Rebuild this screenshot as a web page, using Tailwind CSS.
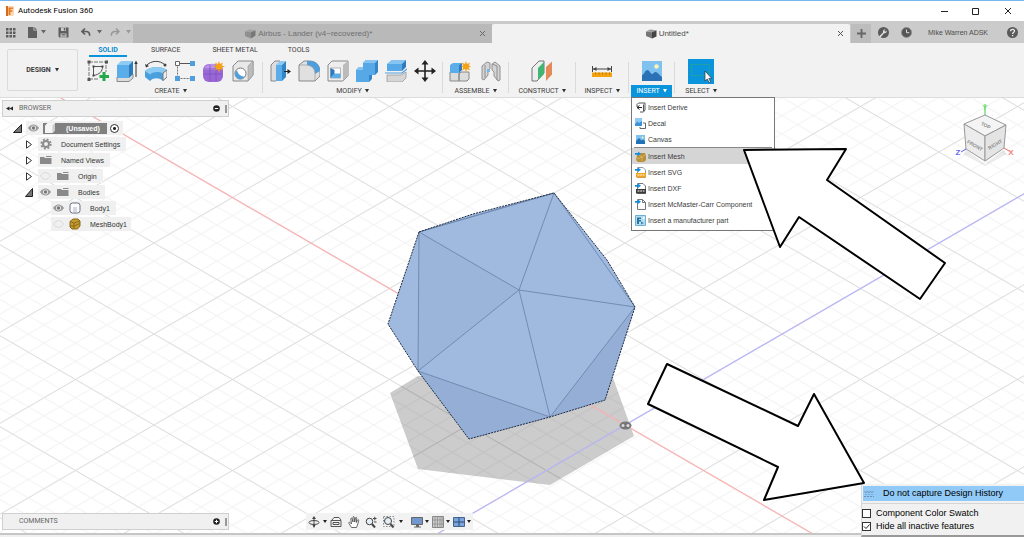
<!DOCTYPE html>
<html lang="en">
<head>
  <meta charset="UTF-8" />
  <title>Autodesk Fusion 360</title>
  <meta name="viewport" content="width=device-width, initial-scale=1.0" />
  <script src="https://cdn.jsdelivr.net/npm/@tailwindcss/browser@4"></script>
</head>
<body class="relative h-screen flex flex-col overflow-hidden bg-white text-[#3c3c3c] text-[7px] leading-none font-['Liberation_Sans',sans-serif]">

  <!-- Title bar -->
  <header class="h-[21px] shrink-0 flex items-center border-t border-[#78b7ee] bg-white pl-[5px] text-black">
    <svg class="w-[10px] h-[10px]" viewBox="0 0 10 10">
      <path d="M1 0h8v9l-1 1H1z" fill="#fbd9bb"/><path d="M1 0h2v10H1z" fill="#d9671c"/>
      <path d="M3.500 1.500H8V3H5.500v1.300h2v1.500h-2V9h-2z" fill="#ee7a1f"/>
    </svg>
    <h1 class="ml-[3px] text-[8px] font-[Roboto,sans-serif]">Autodesk Fusion 360</h1>
    <div class="ml-auto mr-3 flex gap-6">
      <button aria-label="Minimize"><svg class="w-2 h-2" viewBox="0 0 8 8" stroke="#222" fill="none"><path d="M1 4.500h7"/></svg></button>
      <button aria-label="Maximize"><svg class="w-2 h-2" viewBox="0 0 8 8" stroke="#222" fill="none"><path d="M.5 1.500h6v6h-6z"/></svg></button>
      <button aria-label="Close"><svg class="w-2 h-2" viewBox="0 0 8 8" stroke="#222" fill="none"><path d="M1 1l6 6M7 1L1 7"/></svg></button>
    </div>
  </header>

  <!-- Document tabs -->
  <div class="h-[22px] shrink-0 flex items-stretch bg-[#cbcbcb] text-[#4c4c4c]">
    <div class="w-[133px] shrink-0 flex items-center pl-[5px]">
      <button aria-label="Data panel"><svg class="w-[11px] h-[11px]" viewBox="0 0 11 11" fill="#5c5c5c"><path d="M1 1h2.500v2.500H1zM4.500 1H7v2.500H4.500zM8 1h2.500v2.500H8zM1 4.500h2.500V7H1zM4.500 4.500H7V7H4.500zM8 4.500h2.500V7H8zM1 8h2.500v2.500H1zM4.500 8H7v2.500H4.500zM8 8h2.500v2.500H8z"/></svg></button>
      <button aria-label="File" class="ml-3 flex items-center gap-1">
        <svg class="w-[9px] h-[11px]" viewBox="0 0 9 11"><path d="M0 0h5.500v3.500H9V11H0zM6.300 0L9 2.700H6.300z" fill="#606060"/></svg>
        <svg class="w-[5px] h-1" viewBox="0 0 5 4" fill="#666"><path d="M0 0h5L2.500 3.500z"/></svg>
      </button>
      <button aria-label="Save" class="ml-3"><svg class="w-[11px] h-[11px]" viewBox="0 0 11 11"><path d="M.5.500h10v10H1.500l-1-1z" fill="#5e5e5e"/><path d="M3 .5h5v3.500H3z" fill="#cbcbcb"/><path d="M5.800 1h1.500v2.500H5.800z" fill="#5e5e5e"/><path d="M2.500 6.500h6v4h-6z" fill="#cbcbcb"/><path d="M3.500 7.500h4M3.500 9h4" stroke="#5e5e5e" stroke-width=".8"/></svg></button>
      <button aria-label="Undo" class="ml-3 flex items-center gap-[6px]">
        <svg class="w-[10px] h-[10px]" viewBox="0 0 10 10"><path d="M4 1.500L1 4.500l3 3M1.500 4.500H5c2.500 0 3.700 1.500 3.700 4.300" fill="none" stroke="#5c5c5c" stroke-width="1.700"/></svg>
        <svg class="w-[5px] h-1" viewBox="0 0 5 4" fill="#666"><path d="M0 0h5L2.500 3.500z"/></svg>
      </button>
      <button aria-label="Redo" class="ml-2 flex items-center gap-[6px]">
        <svg class="w-[10px] h-[10px]" viewBox="0 0 10 10"><path d="M6 1.500l3 3-3 3M8.500 4.500H5C2.500 4.500 1.300 6 1.300 8.800" fill="none" stroke="#999" stroke-width="1.500"/></svg>
        <svg class="w-[5px] h-1" viewBox="0 0 5 4" fill="#999"><path d="M0 0h5L2.500 3.500z"/></svg>
      </button>
    </div>
    <div class="flex-1 mt-[3px] flex items-center bg-[#b9b9b9] px-[6px] text-[8px] text-[#6e6e6e]">
      <div class="flex-1 flex items-center justify-center gap-[2px]">
        <svg class="w-[11px] h-[10px]" viewBox="0 0 11 10"><path d="M0 2.500L4 .5l6 .8L6.500 3z" fill="#a2a2a2"/><path d="M0 2.500L6 3.200V9.500L0 7z" fill="#8f8f8f"/><path d="M6 3.200l4.500-1.900V6.500L6 9.500z" fill="#777"/></svg>
        <span>Airbus - Lander (v4~recovered)*</span>
      </div>
      <button aria-label="Close Airbus - Lander"><svg class="w-[7px] h-[7px]" viewBox="0 0 7 7" stroke="#666"><path d="M1 1l5 5M6 1L1 6"/></svg></button>
    </div>
    <div class="flex-1 mt-[3px] flex items-center rounded-t-xs bg-[#f2f2f2] px-[6px] text-[8px]">
      <div class="flex-1 flex items-center justify-center gap-[2px]">
        <svg class="w-[11px] h-[10px]" viewBox="0 0 11 10"><path d="M0 2.500L4 .5l6 .8L6.500 3z" fill="#999"/><path d="M0 2.500L6 3.200V9.500L0 7z" fill="#777"/><path d="M6 3.200l4.500-1.900V7.500L6 9.500z" fill="#444"/></svg>
        <span>Untitled*</span>
      </div>
      <button aria-label="Close Untitled"><svg class="w-[7px] h-[7px]" viewBox="0 0 7 7" stroke="#555"><path d="M1 1l5 5M6 1L1 6"/></svg></button>
    </div>
    <div class="w-[174px] shrink-0 flex items-center pl-px pr-[6px]">
      <button aria-label="New design" class="w-5 h-[19px] mt-[3px] flex items-center justify-center bg-[#bdbdbd]"><svg class="w-[9px] h-[9px]" viewBox="0 0 9 9" stroke="#666" stroke-width="1.800"><path d="M0 4.500h9M4.500 0v9"/></svg></button>
      <button aria-label="Extensions" class="ml-[7px]"><svg class="w-[11px] h-[11px]" viewBox="0 0 11 11"><circle cx="5.500" cy="5.500" r="5.500" fill="#5a5a5a"/><path d="M1 9.500l4-4c-.4-2 .8-3.300 2.500-3.200L6.300 3.700l.9 1 1.500-1.200c.3 1.800-1 3.100-2.700 2.700L2.500 10.500z" fill="#e2e2e2"/></svg></button>
      <button aria-label="Job status" class="ml-3"><svg class="w-[11px] h-[11px]" viewBox="0 0 11 11"><circle cx="5.500" cy="5.500" r="5" fill="#555" stroke="#8e8e8e"/><path d="M5.500 2.500v3.200h2.800" stroke="#ddd" fill="none"/></svg></button>
      <span class="ml-4">Mike Warren ADSK</span>
      <button aria-label="Help" class="ml-auto"><svg class="w-[11px] h-[11px]" viewBox="0 0 11 11"><circle cx="5.500" cy="5.500" r="5.500" fill="#5a5a5a"/><path d="M3.600 4.200c0-2.600 3.900-2.400 3.900-.1 0 1.500-1.900 1.500-1.900 3M5.600 8v1.300" stroke="#eee" stroke-width="1.300" fill="none"/></svg></button>
    </div>
  </div>

  <!-- Ribbon -->
  <div class="relative z-20 h-[54px] shrink-0 flex bg-[#f2f2f2] font-[Roboto,sans-serif]">
    <button class="ml-[7px] mr-[2px] my-[6px] w-[71px] shrink-0 flex items-center justify-center gap-1 rounded-xs border border-[#dadada] font-bold">
      DESIGN <svg class="w-1 h-1" viewBox="0 0 4 4" fill="#333"><path d="M0 0h4L2 3.500z"/></svg>
    </button>
    <div class="flex-1">
      <nav class="h-[15px] flex items-stretch gap-6 pl-[9px]">
        <button class="h-[14px] w-[38px] pt-[2px] border-b-2 border-[#0a94dc] font-bold text-[#0a8ad0]">SOLID</button>
        <button class="h-[14px]">SURFACE</button>
        <button class="h-[14px] ml-2">SHEET METAL</button>
        <button class="h-[14px] ml-[6px]">TOOLS</button>
      </nav>
      <div class="h-[39px] flex">
        <!-- Create -->
        <section class="px-[7px] pt-[2px]">
          <div class="flex gap-[7px]">
            <button aria-label="Create sketch"><svg class="w-[22px] h-[22px]" viewBox="0 0 22 22" fill="none"><path d="M2 2v17M2 2h17v10M2 19h10" stroke="#777" stroke-dasharray="4 1"/><path d="M.5.500h3v3h-3zM18 .5h3v3h-3zM.5 18h3v3h-3z" fill="#555"/><path d="M6.500 6.500h9c0 5-3 8-9 9z" stroke="#555"/><path d="M5.500 5.500h2v2h-2zM14.500 5.500h2v2h-2zM5.500 14.500h2v2h-2z" fill="#444"/><path d="M17 12v9M12.500 16.500h9.500" stroke="#24a84c" stroke-width="3"/></svg></button>
            <button aria-label="Extrude"><svg class="w-[22px] h-[22px]" viewBox="0 0 22 22"><path d="M1 17l4-3h12v4l-4 3.500H1z" fill="#ddd" stroke="#888"/><path d="M1 5l4-4h12l-4 4z" fill="#8ecbf2"/><path d="M1 5h12v13H1z" fill="#5badea"/><path d="M13 5l4-4v13l-4 4z" fill="#2b7cbd"/><path d="M20 17V3" stroke="#333"/><path d="M18.300 4L20 .5 21.700 4z" fill="#333"/></svg></button>
            <button aria-label="Revolve"><svg class="w-[22px] h-[22px]" viewBox="0 0 22 22"><path d="M1 6C6 0 15 0 20 5" fill="none" stroke="#444"/><path d="M0 4l1 3.500L4 6z" fill="#333"/><circle cx="20" cy="5" r="1.500" fill="#444"/><path d="M0 11c6-5 16-5 22-1v7l-4 4c-3-3-9-4-13 0l-5-4z" fill="#4a9fdd"/><path d="M0 11c6-5 16-5 22-1l-4 3.500c-4-2-9-2-13 1z" fill="#8ecbf2"/><path d="M18 13l4-3v7l-4 3.500z" fill="#eee" stroke="#777"/></svg></button>
            <button aria-label="Pattern"><svg class="w-[22px] h-[22px]" viewBox="0 0 22 22"><path d="M3.500 3.500v15h15" fill="none" stroke="#777" stroke-dasharray="2 1"/><path d="M4 3.500h14" stroke="#555"/><path d="M1.500 1.500h4v4h-4z" fill="#fff" stroke="#666"/><path d="M16 1h5v5h-5zM1 16h5v5H1zM16 16h5v5h-5z" fill="#4e9fdc"/></svg></button>
            <button aria-label="Create form"><svg class="w-[22px] h-[22px]" viewBox="0 0 22 22"><rect x="0" y="4" width="20" height="18" rx="6" fill="#9a68d4"/><path d="M1 8c4-5 10-5 13-3l-1 5H1z" fill="#bb93ea"/><path d="M1 14h18M7 5v16M13 5v16M1 9h18" stroke="#7d4fc0" stroke-width=".8" fill="none"/><path d="M16 1l1 3 3-1.500L18.800 5.500 22 6.500l-3.200 1L20 10.500 17 9l-1 3.500L15 9l-3 1.500 1.200-3L10 6.500l3.200-1L12 2.500 15 4z" fill="#f5a219"/></svg></button>
            <button aria-label="Hole"><svg class="w-[22px] h-[22px]" viewBox="0 0 22 22"><path d="M1 6l5-5h15v14l-5 6H1z" fill="#e8e8e8" stroke="#888"/><path d="M16 6l5-5v14l-5 6z" fill="#bcbcbc" stroke="#999" stroke-width=".6"/><circle cx="8.500" cy="13.500" r="5.500" fill="#fff" stroke="#777"/><path d="M5 10.200a5 5 0 107.500 6.300C8.500 16.500 6 14 5 10.200z" fill="#4e9fdc"/></svg></button>
          </div>
          <button class="mt-[3px] h-3 w-full flex items-center justify-center gap-[3px]">CREATE <svg class="w-1 h-1" viewBox="0 0 4 4" fill="#333"><path d="M0 0h4L2 3.500z"/></svg></button>
        </section>
        <div class="ml-px w-px my-1 bg-[#dadada]"></div>
        <!-- Modify -->
        <section class="px-[6px] pt-[2px]">
          <div class="flex gap-[7px]">
            <button aria-label="Press pull"><svg class="w-[22px] h-[22px]" viewBox="0 0 22 22"><path d="M2 5l4-4h5v16l-4 4H2z" fill="#ddd" stroke="#888"/><path d="M7 5h6v16H7z" fill="#5badea"/><path d="M7 5l4-4h6l-4 4z" fill="#8ecbf2"/><path d="M13 5l4-4v16l-4 4z" fill="#2f86c9"/><path d="M15 11.500h5" stroke="#222"/><path d="M18.500 9l3.500 2.500-3.500 2.500z" fill="#222"/></svg></button>
            <button aria-label="Fillet"><svg class="w-[22px] h-[22px]" viewBox="0 0 22 22"><path d="M1 5l5-4h5c7 0 11 4 11 11v4l-5 5H1z" fill="#e0e0e0" stroke="#888"/><path d="M9 1h3c6 0 10 4 10 10l-5 3c0-5-2-8-8-9z" fill="#4e9fdc"/><path d="M1 5h6c6 0 10 3 10 9v7" fill="none" stroke="#999" stroke-width=".7"/></svg></button>
            <button aria-label="Shell"><svg class="w-[22px] h-[22px]" viewBox="0 0 22 22"><path d="M1 5l4-4h16v15l-5 5H1z" fill="#eee" stroke="#888"/><path d="M16 5l5-4v15l-5 5z" fill="#bbb"/><path d="M3.500 8h10v10h-10z" fill="#fff" stroke="#888" stroke-width=".6"/><path d="M3.500 8l4 2v4l-4 4z" fill="#2f79bd"/><path d="M3.500 18l4-4.500h6V18z" fill="#5badea"/></svg></button>
            <button aria-label="Combine"><svg class="w-[22px] h-[22px]" viewBox="0 0 22 22"><path d="M7 3l3-3h12v12l-3 3h-3v4l-3 3H0V10l3-3h4z" fill="#3485ca"/><path d="M7 3h12v12h-6v7H0V10h7z" fill="#57a8e6"/><path d="M7 3l3-3h12l-3 3zM0 10l3-3h4v3z" fill="#86c5f1"/></svg></button>
            <button aria-label="Split body"><svg class="w-[22px] h-[22px]" viewBox="0 0 22 22"><path d="M2 15h14l5-3v6l-4 4H2z" fill="#d6d6d6" stroke="#999" stroke-width=".8"/><path d="M2 4l5-4h14l-4 4v7H2z" fill="#57a8e6"/><path d="M2 4l5-4h14l-4 4z" fill="#86c5f1"/><path d="M17 4l4-4v7l-4 4z" fill="#2f79bd"/><path d="M0 13h17l5-4" fill="none" stroke="#4e9fdc" stroke-width="1.200"/></svg></button>
            <button aria-label="Move"><svg class="w-[22px] h-[22px]" viewBox="0 0 22 22"><path d="M11 3v16M3 11h16" stroke="#222" stroke-width="1.600"/><path d="M11 0l3.500 4.500h-7zM11 22l3.500-4.500h-7zM0 11l4.500-3.500v7zM22 11l-4.500-3.500v7z" fill="#222"/></svg></button>
          </div>
          <button class="mt-[3px] h-3 w-full flex items-center justify-center gap-[3px]">MODIFY <svg class="w-1 h-1" viewBox="0 0 4 4" fill="#333"><path d="M0 0h4L2 3.500z"/></svg></button>
        </section>
        <div class="w-px my-1 bg-[#dadada]"></div>
        <!-- Assemble -->
        <section class="px-[6px] pt-[2px]">
          <div class="flex gap-[9px]">
            <button aria-label="New component"><svg class="w-[22px] h-[22px]" viewBox="0 0 22 22"><path d="M1 12h9v9H1zM10 14l2-2h8v7l-2 2h-8z" fill="#ddd" stroke="#888"/><path d="M1 5l3-2h9l-3 2v8H1z" fill="#5badea"/><path d="M10 5l3-2v7l-3 3z" fill="#2f79bd"/><path d="M17 1l1 3 3-1.500L19.800 5.500 22 6.500l-2.200 1L21 10.500 18 9l-1 3.500L16 9l-3 1.500 1.200-3L12 6.500l2.200-1L13 2.500 16 4z" fill="#f5a219"/></svg></button>
            <button aria-label="Joint"><svg class="w-[22px] h-[22px]" viewBox="0 0 22 22" stroke="#888" stroke-width=".9"><path d="M2 6l5-4 3 1v6l-2 2v4l-4 5-2-1z" fill="#d4d4d4"/><path d="M5 5v13" fill="none"/><path d="M12 4l3-2 5 4v14l-2 1-4-5v-4l-2-2z" fill="#d4d4d4"/><path d="M17 6v14M12 4l5 2" fill="none"/><path d="M7 9h3v3H7z" fill="#79b6e4" stroke="none"/></svg></button>
          </div>
          <button class="mt-[3px] h-3 w-full flex items-center justify-center gap-[3px]">ASSEMBLE <svg class="w-1 h-1" viewBox="0 0 4 4" fill="#333"><path d="M0 0h4L2 3.500z"/></svg></button>
        </section>
        <div class="w-px my-1 bg-[#dadada]"></div>
        <!-- Construct -->
        <section class="w-[66px] pt-[2px]">
          <button aria-label="Offset plane" class="block mx-auto"><svg class="w-[22px] h-[22px]" viewBox="0 0 22 22"><path d="M1 8l7-7h5v12l-7 8H1z" fill="#eee" stroke="#777"/><path d="M7 8l6-6v12l-6 6z" fill="#42b573"/><path d="M15 7l6-5.500v13L15 21z" fill="#e48a56"/></svg></button>
          <button class="mt-[3px] h-3 w-full flex items-center justify-center gap-[3px]">CONSTRUCT <svg class="w-1 h-1" viewBox="0 0 4 4" fill="#333"><path d="M0 0h4L2 3.500z"/></svg></button>
        </section>
        <div class="w-px my-1 bg-[#dadada]"></div>
        <!-- Inspect -->
        <section class="w-[52px] pt-[2px]">
          <button aria-label="Measure" class="block mx-auto"><svg class="w-[22px] h-[22px]" viewBox="0 0 22 22"><path d="M1.500 6v6M20.500 6v6M2 9h18" stroke="#444"/><path d="M2 9l3.500-2v4zM20 9l-3.500-2v4z" fill="#444"/><path d="M1 12.500h20V17H1z" fill="#f2a30d"/><path d="M4.500 12.500v2M8 12.500v2M11.500 12.500v2M15 12.500v2M18.500 12.500v2" stroke="#a56b00" stroke-width=".8"/></svg></button>
          <button class="mt-[3px] h-3 w-full flex items-center justify-center gap-[3px]">INSPECT <svg class="w-1 h-1" viewBox="0 0 4 4" fill="#333"><path d="M0 0h4L2 3.500z"/></svg></button>
        </section>
        <div class="w-px my-1 bg-[#dadada]"></div>
        <!-- Insert -->
        <section class="relative w-[45px] pt-[2px]">
          <button aria-label="Insert image" class="block mx-auto"><svg class="w-[22px] h-[22px]" viewBox="0 0 22 22"><path d="M1 1h20v20H1z" fill="#7fc2f0"/><circle cx="15.500" cy="6.500" r="2.200" fill="#fdf4b8"/><path d="M1 15c2 0 3-5 5.500-5 2 0 3 4 4.500 4s2-2 3.500-2c2 0 4 3 6.500 5v4H1z" fill="#2a72b5"/></svg></button>
          <button class="mt-[3px] mx-auto h-3 w-[41px] flex items-center justify-center gap-[3px] bg-[#0a94dc] text-white" aria-expanded="true">INSERT <svg class="w-1 h-1" viewBox="0 0 4 4" fill="#fff"><path d="M0 0h4L2 3.500z"/></svg></button>

          <ul class="absolute top-full left-[2px] w-36 border border-[#777] bg-white pt-px pb-[2px] font-['Liberation_Sans',sans-serif] whitespace-nowrap">
            <li><button class="h-4 w-full flex items-center gap-[2px] pl-[3px]"><svg class="w-[11px] h-[11px]" viewBox="0 0 11 11" fill="none" stroke="#555"><path d="M2 5V2.500L3.500 1H10v7l-1.500 2H5M8.500 2.500V9"/><path d="M7 5.500H2.500M4.500 3.500l-2.500 2 2.500 2" stroke="#222"/></svg>Insert Derive</button></li>
            <li><button class="h-4 w-full flex items-center gap-[2px] pl-[3px]"><svg class="w-[11px] h-[11px]" viewBox="0 0 11 11"><path d="M0 0h7v8H0z" fill="#3c92d6"/><path d="M0 0h7v3L4 5 2.500 3.500 0 6z" fill="#8fcaf2"/><path d="M8 5h2.500v5.500H5V9" fill="none" stroke="#666"/></svg>Decal</button></li>
            <li><button class="h-4 w-full flex items-center gap-[2px] pl-[3px]"><svg class="w-[11px] h-[11px]" viewBox="0 0 11 11"><path d="M1 1h9v9H1z" fill="#7fc2f0"/><circle cx="7.500" cy="3.500" r="1" fill="#fff3a8"/><path d="M1 7l3-3 2.500 2.500L8 5.500l2 1.500v3H1z" fill="#2073b8"/></svg>Canvas</button></li>
            <li class="mx-[2px] h-px bg-[#888]"></li>
            <li><button class="h-4 w-full flex items-center gap-[2px] bg-[#d5d5d5] pl-[3px]"><svg class="w-[11px] h-[11px]" viewBox="0 0 11 11"><path d="M2 4l2-2h6l1 3v4l-2 2H3L1 9z" fill="#b98f3a"/><path d="M4 4l3 2 3-2M7 6v4M2 8l5-2" stroke="#e2c272" stroke-width=".7" fill="none"/><path d="M0 2h3V.5L6 2.800 3 5V3.700H0z" fill="#0f8de0"/></svg>Insert Mesh</button></li>
            <li><button class="h-4 w-full flex items-center gap-[2px] pl-[3px]"><svg class="w-[11px] h-[11px]" viewBox="0 0 11 11"><path d="M2.500.500H8L10.500 3v7.500h-8z" fill="#fff" stroke="#999"/><path d="M1 6h10v4.500H1z" fill="#f0a51f"/><path d="M2.500 8h7" stroke="#fff" stroke-dasharray="2 .7"/><path d="M0 2h3V.5L6 2.800 3 5V3.700H0z" fill="#0f8de0"/></svg>Insert SVG</button></li>
            <li><button class="h-4 w-full flex items-center gap-[2px] pl-[3px]"><svg class="w-[11px] h-[11px]" viewBox="0 0 11 11"><path d="M2.500.500H8L10.500 3v7.500h-8z" fill="#fff" stroke="#777"/><path d="M1 6h10v4.500H1z" fill="#3a3a3a"/><path d="M2.500 8h7" stroke="#fff" stroke-dasharray="2 .7"/><path d="M0 2h3V.5L6 2.800 3 5V3.700H0z" fill="#0f8de0"/></svg>Insert DXF</button></li>
            <li><button class="h-4 w-full flex items-center gap-[2px] pl-[3px]"><svg class="w-[11px] h-[11px]" viewBox="0 0 11 11"><path d="M2.500.500H7.500L10.500 3.500v7h-8z" fill="#fff" stroke="#777"/><path d="M7.500.500v3h3" fill="none" stroke="#777"/><path d="M0 2h3V.5L6 2.800 3 5V3.700H0z" fill="#0f8de0"/></svg>Insert McMaster-Carr Component</button></li>
            <li><button class="h-4 w-full flex items-center gap-[2px] pl-[3px]"><svg class="w-[11px] h-[11px]" viewBox="0 0 11 11"><path d="M.5.500h10v10H.5z" fill="#b5dcef" stroke="#6db0d0"/><path d="M2 2.500h4v1.500H4V5h2v1.500H4V9H2z" fill="#28769f"/><path d="M6 6.500L9 8 6 9.500z" fill="#3d8cb5"/><path d="M8 2h1.500v2H8z" fill="#fff"/></svg>Insert a manufacturer part</button></li>
          </ul>
        </section>
        <div class="w-px my-1 bg-[#dadada]"></div>
        <!-- Select -->
        <section class="w-[52px]">
          <button aria-label="Select" class="block mx-auto"><svg class="w-[26px] h-[26px]" viewBox="0 0 26 26"><path d="M0 1h26v25H0z" fill="#0a94dc"/><path d="M3.500 6.500h18v11h-18z" fill="none" stroke="#2aa58b" stroke-dasharray="2 1"/><path d="M17 13v10l2.300-2 1.700 3.500 1.500-.8-1.700-3.300h3z" fill="#fff" stroke="#333" stroke-width=".7"/></svg></button>
          <button class="mt-px h-3 w-full flex items-center justify-center gap-[3px]">SELECT <svg class="w-1 h-1" viewBox="0 0 4 4" fill="#333"><path d="M0 0h4L2 3.500z"/></svg></button>
        </section>
      </div>
    </div>
  </div>

  <!-- Viewport -->
  <main class="relative flex-1 min-h-0 flex flex-col justify-between border-t border-[#dcdcdc]">
    <svg class="absolute inset-0 w-full h-full" viewBox="0 98 1024 439" preserveAspectRatio="xMidYMid slice" fill="none">
      <defs>
        <pattern id="minor" x="625" y="425" width="31.400" height="18.200" patternUnits="userSpaceOnUse">
          <path d="M-3.140-1.820l37.680 21.840M-3.140 20.020L34.540-1.820" stroke="#f1f1f1"/>
        </pattern>
        <pattern id="major" x="625" y="425" width="157" height="91" patternUnits="userSpaceOnUse">
          <path d="M-15.700-9.100l188.400 109.200M-15.700 100.100L172.700-9.100" stroke="#dedede"/>
        </pattern>
      </defs>
      <rect y="98" width="1024" height="439" fill="#fff"/>
      <rect y="98" width="1024" height="439" fill="url(#minor)"/>
      <rect y="98" width="1024" height="439" fill="url(#major)"/>
      <!-- shadow -->
      <path d="M390 393l28 76 132 16 84-49-21-58-195-2z" fill="#000" fill-opacity=".2"/>
      <!-- axes -->
      <path d="M60.800 98L813 534" stroke="#fbb5b5" stroke-width="1.300"/>
      <path d="M437 534l587-340.200" stroke="#bab8f6" stroke-width="1.300"/>
      <!-- body -->
      <path d="M419 232l54-18 81-21 53 67 28 47-30 93-55 17-81 22-51-68-30-47z" fill="#9fb9df"/>
      <path d="M419 232l-1 139 101-81z" fill="#9ab4da"/>
      <path d="M418 371l51 68 81-22zM635 307l-85 110 55-17z" fill="#94aed5"/>
      <path d="M519 290L419 232M519 290l35-97M519 290l116 17M519 290l31 127M519 290l-101 81M419 232l-1 139 132 46 85-110-81-114z" stroke="#6d86ab" stroke-width=".9"/>
      <path d="M419 232l135-39" stroke="#6d86ab" stroke-width=".7"/>
      <path d="M419 232l54-18 81-21 53 67 28 47-30 93-55 17-81 22-51-68-30-47z" stroke="#1d2a40" stroke-dasharray="2 1"/>
      <!-- origin -->
      <ellipse cx="625.500" cy="425.500" rx="6" ry="4" fill="#777"/>
      <circle cx="623" cy="425.500" r="1.500" fill="#ddd"/><circle cx="628" cy="425.500" r="1.500" fill="#ddd"/>
      <!-- view cube -->
      <path d="M966 150l19 14 19-14 3 4-22 12-22-12z" fill="#000" fill-opacity=".08"/>
      <path d="M985 104v12" stroke="#7de07d" stroke-width="1.500"/><path d="M966 149l-5 3" stroke="#5a5af0"/><path d="M1004 148l5 3" stroke="#f06a6a"/>
      <path d="M985 115l21 10-21 11-21-12z" fill="#f4f4f4" stroke="#999"/>
      <path d="M964 124l21 12v25l-19-12z" fill="#ececec" stroke="#999"/>
      <path d="M1006 125l-21 11v25l19-13z" fill="#e4e4e4" stroke="#999"/>
      <g font-family="Liberation Sans, sans-serif" text-anchor="middle" fill="#8e8e8e">
        <text transform="translate(974 147) rotate(30)" font-size="5" font-weight="bold">FRONT</text>
        <text transform="translate(996 146) rotate(-30)" font-size="5" font-weight="bold">RIGHT</text>
        <text transform="translate(985 127) rotate(26)" font-size="5" font-weight="bold">TOP</text>
        <text x="985" y="110" font-size="8" fill="#55d855">Y</text>
        <text x="958" y="155" font-size="8" font-weight="bold" fill="#6a6af2">Z</text>
        <text x="1011" y="155" font-size="8" font-weight="bold" fill="#f47a7a">X</text>
      </g>
    </svg>

    <!-- Browser -->
    <aside class="relative w-[227px] ml-[2px] mt-[2px]">
      <div class="h-[17px] flex items-center border border-[#cfcfcf] bg-[#f0f0f0] pl-[3px] font-[Roboto,sans-serif] text-[#666]">
        <button aria-label="Collapse browser"><svg class="w-[7px] h-[5px]" viewBox="0 0 7 5" fill="#222"><path d="M0 2.500L3.500.500v4zM3.500 2.500L7 .5v4z"/></svg></button>
        <h2 class="ml-[6px]">BROWSER</h2>
        <button aria-label="Minimize browser" class="ml-auto"><svg class="w-[7px] h-[7px]" viewBox="0 0 7 7"><circle cx="3.500" cy="3.500" r="3.300" fill="#222"/><path d="M1.800 3.500h3.400" stroke="#fff"/></svg></button>
        <span class="ml-[5px] mr-px w-[2px] h-2 border-x border-[#999]"></span>
      </div>
      <ul class="mt-1 flex flex-col gap-[2px] text-[#333]">
        <li class="flex items-center h-[14px] pl-[11px]">
          <svg class="w-[9px] h-[9px]" viewBox="0 0 9 9"><path d="M8.500.500v8H.5z" fill="#777" stroke="#222"/></svg>
          <div class="ml-1 h-[14px] flex items-center bg-[#f0f0f0] pl-[2px] pr-1">
            <svg class="w-[11px] h-2" viewBox="0 0 11 8"><path d="M0 4c3-4.700 8-4.700 11 0-3 4.700-8 4.700-11 0z" fill="#999"/><circle cx="5.500" cy="4" r="2.500" fill="#eee"/><circle cx="5.500" cy="4" r="1.700" fill="#777"/></svg>
            <div class="ml-1 h-[11px] flex items-center bg-[#808080] pl-[2px] pr-[7px] font-bold text-white">
              <svg class="w-[10px] h-[10px]" viewBox="0 0 10 10"><path d="M0 2.500L2.500 0H10v7.500L7.500 10H0z" fill="#f4f4f4"/><path d="M7.500 2.500L10 0v7.500L7.500 10z" fill="#ccc"/></svg>
              <span class="ml-[11px]">(Unsaved)</span>
            </div>
            <input type="radio" checked aria-label="Activate (Unsaved)" class="ml-[3px] w-[9px] h-[9px] appearance-none rounded-full border border-[#333] bg-[radial-gradient(circle,#222_0_1px,#fff_2px)]" />
          </div>
        </li>
        <li class="flex items-center h-[14px] pl-[23px]">
          <svg class="w-2 h-[9px]" viewBox="0 0 8 9"><path d="M1.500.800l5 3.700-5 3.700z" fill="#fff" stroke="#333"/></svg>
          <div class="ml-[5px] h-[14px] flex items-center bg-[#f0f0f0] pl-[2px] pr-[6px]">
            <svg class="w-3 h-3" viewBox="0 0 12 12" fill="none" stroke="#8c8c8c"><circle cx="6" cy="6" r="3" stroke-width="2"/><circle cx="6" cy="6" r="4.800" stroke-width="1.600" stroke-dasharray="2 1.770"/></svg>
            <span class="ml-[9px]">Document Settings</span>
          </div>
        </li>
        <li class="flex items-center h-[14px] pl-[23px]">
          <svg class="w-2 h-[9px]" viewBox="0 0 8 9"><path d="M1.500.800l5 3.700-5 3.700z" fill="#fff" stroke="#333"/></svg>
          <div class="ml-[5px] h-[14px] flex items-center bg-[#f0f0f0] pl-[2px] pr-[6px]">
            <svg class="w-3 h-2" viewBox="0 0 12 8"><path d="M0 8V1h4l1 1h6.500v6z" fill="#8a8a8a"/><path d="M6 .5h5.500" stroke="#8a8a8a"/></svg>
            <span class="ml-[9px]">Named Views</span>
          </div>
        </li>
        <li class="flex items-center h-[14px] pl-[23px]">
          <svg class="w-2 h-[9px]" viewBox="0 0 8 9"><path d="M1.500.800l5 3.700-5 3.700z" fill="#fff" stroke="#333"/></svg>
          <div class="ml-[5px] h-[14px] flex items-center bg-[#f0f0f0] pl-[2px] pr-[6px]">
            <svg class="w-[11px] h-2" viewBox="0 0 11 8"><path d="M.5 4c3-4.500 7-4.500 10 0-3 4.500-7 4.500-10 0z" fill="none" stroke="#dadada"/></svg>
            <svg class="ml-[6px] w-3 h-2" viewBox="0 0 12 8"><path d="M0 8V1h4l1 1h6.500v6z" fill="#8a8a8a"/><path d="M6 .5h5.500" stroke="#8a8a8a"/></svg>
            <span class="ml-[9px]">Origin</span>
          </div>
        </li>
        <li class="flex items-center h-[14px] pl-[23px]">
          <svg class="w-2 h-[9px]" viewBox="0 0 8 9"><path d="M7.500.500v8h-7z" fill="#777" stroke="#222"/></svg>
          <div class="ml-[5px] h-[14px] flex items-center bg-[#f0f0f0] pl-[2px] pr-[6px]">
            <svg class="w-[11px] h-2" viewBox="0 0 11 8"><path d="M0 4c3-4.700 8-4.700 11 0-3 4.700-8 4.700-11 0z" fill="#999"/><circle cx="5.500" cy="4" r="2.500" fill="#eee"/><circle cx="5.500" cy="4" r="1.700" fill="#777"/></svg>
            <svg class="ml-[6px] w-3 h-2" viewBox="0 0 12 8"><path d="M0 8V1h4l1 1h6.500v6z" fill="#8a8a8a"/><path d="M6 .5h5.500" stroke="#8a8a8a"/></svg>
            <span class="ml-[9px]">Bodies</span>
          </div>
        </li>
        <li class="flex items-center h-[14px] pl-[49px]">
          <div class="h-[14px] flex items-center bg-[#f0f0f0] pl-[2px] pr-[6px]">
            <svg class="w-[11px] h-2" viewBox="0 0 11 8"><path d="M0 4c3-4.700 8-4.700 11 0-3 4.700-8 4.700-11 0z" fill="#999"/><circle cx="5.500" cy="4" r="2.500" fill="#eee"/><circle cx="5.500" cy="4" r="1.700" fill="#777"/></svg>
            <svg class="ml-[5px] w-3 h-3" viewBox="0 0 12 12"><rect x="1" y="1" width="10" height="10" rx="2.500" fill="#fff" stroke="#6b6f80"/><path d="M4 5h4v5H4z" fill="#d5d8e2"/></svg>
            <span class="ml-[9px]">Body1</span>
          </div>
        </li>
        <li class="flex items-center h-[14px] pl-[49px]">
          <div class="h-[14px] flex items-center bg-[#f0f0f0] pl-[2px] pr-[4px]">
            <svg class="w-[11px] h-2" viewBox="0 0 11 8"><path d="M.5 4c3-4.500 7-4.500 10 0-3 4.500-7 4.500-10 0z" fill="none" stroke="#dadada"/></svg>
            <svg class="ml-[5px] w-3 h-3" viewBox="0 0 12 12"><path d="M1 3.500L4 1h5l2 2v5l-2.500 3H3L1 9z" fill="#c29a2e" stroke="#8a6a18"/><path d="M1 3.500l4 1.500 6-2M5 5v6M1 8h4l6-2.500" stroke="#6e5410" stroke-width=".6" fill="none"/></svg>
            <span class="ml-[9px]">MeshBody1</span>
          </div>
        </li>
      </ul>
    </aside>

    <!-- Bottom bar -->
    <div class="relative flex flex-col">
      <div class="flex items-center pl-[2px] mb-[3px]">
        <div class="w-[227px] h-[17px] flex items-center border border-[#cfcfcf] bg-[#f0f0f0] pl-4 font-[Roboto,sans-serif] text-[#666]">
          <h2>COMMENTS</h2>
          <button aria-label="Expand comments" class="ml-auto"><svg class="w-[7px] h-[7px]" viewBox="0 0 7 7"><circle cx="3.500" cy="3.500" r="3.300" fill="#222"/><path d="M1.800 3.500h3.400M3.500 1.800v3.400" stroke="#fff"/></svg></button>
          <span class="ml-[5px] mr-px w-[2px] h-2 border-x border-[#999]"></span>
        </div>
        <div class="ml-[77px] h-[17px] flex items-center bg-[#f2f2f2] px-[2px]">
          <button aria-label="Orbit" class="flex items-center gap-[3px]"><svg class="w-3 h-3" viewBox="0 0 12 12" fill="none" stroke="#444"><ellipse cx="6" cy="6.500" rx="5" ry="2"/><path d="M6 2v9"/><path d="M6 0l2 3H4zM4.500 9h3L6 12z" fill="#444" stroke="none"/></svg><svg class="w-1 h-1" viewBox="0 0 4 4"><path d="M0 0h4L2 3z" fill="#222"/></svg></button>
          <button aria-label="Look at" class="ml-[3px]"><svg class="w-3 h-3" viewBox="0 0 12 12" fill="none" stroke="#555"><path d="M1 4.500h10v6H1z"/><path d="M2 4l2-2.500h5L11 4M3 6.500h6v2H3z"/></svg></button>
          <button aria-label="Pan" class="ml-[6px]"><svg class="w-3 h-3" viewBox="0 0 12 12"><path d="M3.500 11.500L1 7.500c-.7-1.200.7-1.700 1.300-.9L3.500 8 2.800 3c-.1-1 1-1.200 1.200-.3L5 6V1.300c0-1 1.200-1 1.300 0L6.700 6l.8-4c.2-1 1.300-.8 1.200.2L8.300 6.500l1.200-2.300c.5-.9 1.500-.5 1.200.5L9.500 9l-1 2.500z" fill="#fff" stroke="#444" stroke-width=".8"/></svg></button>
          <button aria-label="Zoom" class="ml-[5px]"><svg class="w-3 h-3" viewBox="0 0 12 12" fill="none" stroke="#444"><circle cx="4.500" cy="5.500" r="3.300" fill="#e4eef6"/><path d="M7 8l3 3.500" stroke-width="2"/><path d="M8 2.500h3.500M9.800.800v3.500M9 6h2.500"/></svg></button>
          <button aria-label="Zoom window" class="ml-[6px] flex items-center gap-1"><svg class="w-3 h-3" viewBox="0 0 12 12" fill="none" stroke="#444"><path d="M.5.500h10.500v10H.5z" stroke-dasharray="1.500 1.500" stroke="#888"/><circle cx="5" cy="5" r="3.500" fill="#e4eef6"/><path d="M7.500 8l3 3.500" stroke-width="2"/></svg><svg class="w-1 h-1" viewBox="0 0 4 4"><path d="M0 0h4L2 3z" fill="#222"/></svg></button>
          <button aria-label="Display settings" class="ml-2 flex items-center gap-[2px]"><svg class="w-3 h-3" viewBox="0 0 12 12"><path d="M.5 1.500h11v7H.5z" fill="#7297cf" stroke="#666"/><path d="M5 9h3v2H5z" fill="#666"/><path d="M3 11h7" stroke="#666"/></svg><svg class="w-1 h-1" viewBox="0 0 4 4"><path d="M0 0h4L2 3z" fill="#222"/></svg></button>
          <button aria-label="Grid and snaps" class="ml-[3px] flex items-center gap-[2px]"><svg class="w-3 h-3" viewBox="0 0 12 12"><path d="M.5.500h11v11H.5z" fill="#ccc" stroke="#888"/><path d="M3 1v10M5.500 1v10M8 1v10M10 1v10M1 4h10M1 8h10" stroke="#888" stroke-width=".7"/></svg><svg class="w-1 h-1" viewBox="0 0 4 4"><path d="M0 0h4L2 3z" fill="#222"/></svg></button>
          <button aria-label="Viewports" class="ml-[3px] flex items-center gap-[2px]"><svg class="w-3 h-3" viewBox="0 0 12 12"><path d="M.5 1.500h11v9H.5z" fill="#7ba4dc" stroke="#44638f"/><path d="M6 1.500v9M.5 6h11" stroke="#2d4a75"/></svg><svg class="w-1 h-1" viewBox="0 0 4 4"><path d="M0 0h4L2 3z" fill="#222"/></svg></button>
        </div>
      </div>
      <div class="h-1 border-t-2 border-[#c6c6c6] bg-[#f0f0f0]"></div>
    </div>

    <!-- Context menu -->
    <div class="absolute right-0 bottom-0 w-[163px] h-[53px] border-l border-b-2 border-l-[#d8d8d8] border-b-[#999] bg-[#f1f1f1] pt-[2px] text-[9px] text-black">
      <button class="ml-px h-[15px] w-[161px] flex items-center bg-[#91c9f7] pl-px">
        <svg class="w-[10px] h-2" viewBox="0 0 10 8" fill="none" stroke="#6d8fb5"><path d="M0 6.500h10" stroke-dasharray="2 1"/><path d="M.5 1l1.500 2L3.500 1M3.500 1l1.500 2L6.500 1M6.500 1L8 3l1.500-2" stroke-width=".8"/><path d="M2 4v1M5 4v1M8 4v1"/></svg>
        <span class="ml-[9px]">Do not capture Design History</span>
      </button>
      <div class="my-[2px] h-px bg-[#d5d5d5]"></div>
      <div class="pt-px">
        <label class="flex items-center h-[13px] gap-[5px]"><input type="checkbox" class="w-[9px] h-[9px] appearance-none border border-[#333] bg-white" /><span>Component Color Swatch</span></label>
        <label class="flex items-center h-[13px] gap-[5px]">
          <span class="relative">
            <input type="checkbox" checked class="block w-[9px] h-[9px] appearance-none border border-[#333] bg-white" />
            <svg class="absolute inset-0 w-[9px] h-[9px]" viewBox="0 0 9 9" fill="none" stroke="#222"><path d="M2 4.500l2 2 3.500-4"/></svg>
          </span>
          <span>Hide all inactive features</span>
        </label>
      </div>
    </div>
  </main>

  <!-- Callout arrows -->
  <svg class="absolute inset-0 z-30 w-full h-full pointer-events-none" viewBox="0 0 1024 537" preserveAspectRatio="xMidYMid slice" fill="#fff" stroke="#000" stroke-width="2" stroke-linejoin="round">
    <path d="M744 150l102-1-19 31 118 83-25 36-121-82-19 30z"/>
    <path d="M667 364l131 62 16-32 50 89-100 17 14-33-130-63z"/>
  </svg>
</body>
</html>
